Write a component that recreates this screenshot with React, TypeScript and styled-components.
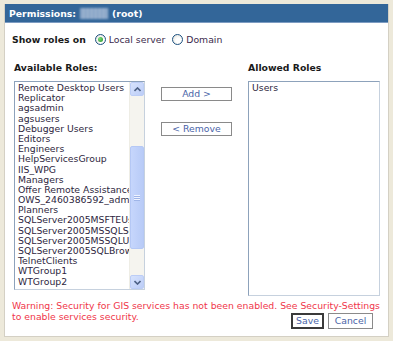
import styled, { createGlobalStyle } from "styled-components";

const GlobalStyle = createGlobalStyle`
  html, body {
    margin: 0;
    padding: 0;
    background: #ede9da;
  }
  body {
    padding: 4px 0 0 4px;
    font-family: "DejaVu Sans", Verdana, sans-serif;
  }
`;

const Panel = styled.div`
  box-sizing: border-box;
  width: 385px;
  height: 333px;
  background: #ffffff;
  border: 1px solid #d4d0c4;
  border-top: none;
  display: flex;
  flex-direction: column;
`;

const Header = styled.div`
  height: 18px;
  background: #336699;
  border-bottom: 1px solid #7d9cc2;
  color: #ffffff;
  font-weight: bold;
  font-size: 9.3px;
  display: flex;
  align-items: center;
  gap: 4px;
  padding-left: 4px;
`;

const Redacted = styled.span`
  display: inline-block;
  width: 28px;
  height: 11px;
  background: repeating-linear-gradient(
    90deg,
    #9ab2d0 0px,
    #7f9dc0 2px,
    #b0c4dc 4px
  );
  filter: blur(0.8px);
`;

const Body = styled.div`
  flex: 1;
  display: flex;
  flex-direction: column;
  padding: 0 8px 0 7px;
`;

const RolesOn = styled.div`
  display: flex;
  align-items: center;
  height: 14px;
  margin-top: 9px;
  font-size: 9.3px;
  color: #1a1a1a;
`;

const Bold = styled.span`
  font-weight: bold;
  margin-right: 9px;
`;

const RadioLabel = styled.label`
  display: flex;
  align-items: center;
  gap: 3px;
  margin-right: 7px;
  color: #3b2a4d;
`;

const Radio = styled.input.attrs({ type: "radio" })`
  appearance: none;
  margin: 0;
  width: 11px;
  height: 11px;
  border-radius: 50%;
  border: 1px solid #1c5180;
  background: radial-gradient(circle at 60% 60%, #ffffff 30%, #dcdcd4 100%);
  display: grid;
  place-items: center;
  box-sizing: border-box;

  &:checked::after {
    content: "";
    width: 5px;
    height: 5px;
    border-radius: 50%;
    background: radial-gradient(circle at 35% 35%, #7be07b, #218c21);
  }
`;

const Columns = styled.div`
  display: grid;
  grid-template-columns: 131px 71px 132px;
  column-gap: 16px;
  margin-top: 15px;
  padding-left: 2px;
`;

const Column = styled.div`
  display: flex;
  flex-direction: column;
`;

const ColTitle = styled.div`
  font-weight: bold;
  font-size: 9.3px;
  color: #1a1a1a;
  height: 13px;
  line-height: 13px;
  margin-bottom: 7px;
`;

const ListBox = styled.div<{ $h: number }>`
  box-sizing: border-box;
  height: ${(p) => p.$h}px;
  border: 1px solid #8da2bb;
  border-right-color: #c6d1de;
  border-bottom-color: #c6d1de;
  display: flex;
  background: #ffffff;
  overflow: hidden;
`;

const Items = styled.div`
  flex: 1;
  overflow: hidden;
  padding: 1px 0 0 3px;
`;

const Item = styled.div`
  font-size: 9.3px;
  line-height: 10.2px;
  height: 10.2px;
  color: #2e1f3e;
  white-space: nowrap;
`;

const ScrollBar = styled.div`
  width: 14px;
  display: flex;
  flex-direction: column;
  background: #f5f4ef;
  border-left: 1px solid #eeede5;
`;

const ScrollBtn = styled.div`
  box-sizing: border-box;
  height: 14px;
  border: 1px solid #bccdf6;
  border-radius: 2px;
  background: linear-gradient(135deg, #d7e3fd, #bccdf7);
  display: grid;
  place-items: center;
`;

const Track = styled.div`
  flex: 1;
  display: flex;
  flex-direction: column;
`;

const Thumb = styled.div<{ $top: number; $size: number }>`
  box-sizing: border-box;
  margin-top: ${(p) => p.$top}px;
  height: ${(p) => p.$size}px;
  border: 1px solid #b5c8f5;
  border-radius: 2px;
  background: linear-gradient(90deg, #c6d6fc, #b8cbf7);
  display: grid;
  place-items: center;
`;

const Grip = styled.div`
  width: 6px;
  height: 6px;
  background: repeating-linear-gradient(
    180deg,
    #eef3ff 0px,
    #eef3ff 1px,
    #9fb5e8 1px,
    #9fb5e8 2px
  );
`;

const MoveButtons = styled.div`
  display: flex;
  flex-direction: column;
  gap: 21px;
  padding-top: 26px;
`;

const MoveButton = styled.button`
  box-sizing: border-box;
  width: 71px;
  height: 14px;
  padding: 0;
  border: 1px solid #8a8a8a;
  background: #ffffff;
  color: #4a64a8;
  font-family: inherit;
  font-size: 9.3px;
  line-height: 12px;
`;

const Footer = styled.div`
  display: flex;
  flex-direction: column;
  margin-top: 4px;
`;

const Warning = styled.div`
  font-size: 9.3px;
  line-height: 11px;
  color: #f0364a;
  white-space: nowrap;
`;

const Actions = styled.div`
  display: flex;
  justify-content: flex-end;
  gap: 4px;
  margin-top: -9px;
  padding-right: 7px;
`;

const ActionButton = styled.button<{ $default?: boolean; $w: number }>`
  box-sizing: border-box;
  width: ${(p) => p.$w}px;
  height: 16px;
  padding: 0;
  border: ${(p) => (p.$default ? "2px solid #3a3a3a" : "1px solid #8a8a8a")};
  background: #ffffff;
  color: #4a64a8;
  font-family: inherit;
  font-size: 9.3px;
  line-height: 12px;
`;

const available = [
  "Remote Desktop Users",
  "Replicator",
  "agsadmin",
  "agsusers",
  "Debugger Users",
  "Editors",
  "Engineers",
  "HelpServicesGroup",
  "IIS_WPG",
  "Managers",
  "Offer Remote Assistance Helpers",
  "OWS_2460386592_admin",
  "Planners",
  "SQLServer2005MSFTEUser",
  "SQLServer2005MSSQLServer",
  "SQLServer2005MSSQLUser",
  "SQLServer2005SQLBrowser",
  "TelnetClients",
  "WTGroup1",
  "WTGroup2",
];

function Arrow({ up }: { up?: boolean }) {
  return (
    <svg width="7" height="5" viewBox="0 0 7 5">
      <path
        d={up ? "M0.5 4 L3.5 1 L6.5 4" : "M0.5 1 L3.5 4 L6.5 1"}
        fill="none"
        stroke="#4d6185"
        strokeWidth="1.6"
      />
    </svg>
  );
}

export default function App() {
  return (
    <>
      <GlobalStyle />
      <Panel>
        <Header>
          Permissions: <Redacted /> (root)
        </Header>
        <Body>
          <RolesOn>
            <Bold>Show roles on</Bold>
            <RadioLabel>
              <Radio name="scope" defaultChecked />
              Local server
            </RadioLabel>
            <RadioLabel>
              <Radio name="scope" />
              Domain
            </RadioLabel>
          </RolesOn>

          <Columns>
            <Column>
              <ColTitle>Available Roles:</ColTitle>
              <ListBox $h={209}>
                <Items>
                  {available.map((r) => (
                    <Item key={r}>{r}</Item>
                  ))}
                </Items>
                <ScrollBar>
                  <ScrollBtn>
                    <Arrow up />
                  </ScrollBtn>
                  <Track>
                    <Thumb $top={50} $size={103}>
                      <Grip />
                    </Thumb>
                  </Track>
                  <ScrollBtn>
                    <Arrow />
                  </ScrollBtn>
                </ScrollBar>
              </ListBox>
            </Column>

            <MoveButtons>
              <MoveButton>Add &gt;</MoveButton>
              <MoveButton>&lt; Remove</MoveButton>
            </MoveButtons>

            <Column>
              <ColTitle>Allowed Roles</ColTitle>
              <ListBox $h={215}>
                <Items>
                  <Item>Users</Item>
                </Items>
              </ListBox>
            </Column>
          </Columns>

          <Footer>
            <Warning>
              Warning: Security for GIS services has not been enabled. See
              Security-Settings
              <br />
              to enable services security.
            </Warning>
            <Actions>
              <ActionButton $default $w={33}>
                Save
              </ActionButton>
              <ActionButton $w={45}>Cancel</ActionButton>
            </Actions>
          </Footer>
        </Body>
      </Panel>
    </>
  );
}
